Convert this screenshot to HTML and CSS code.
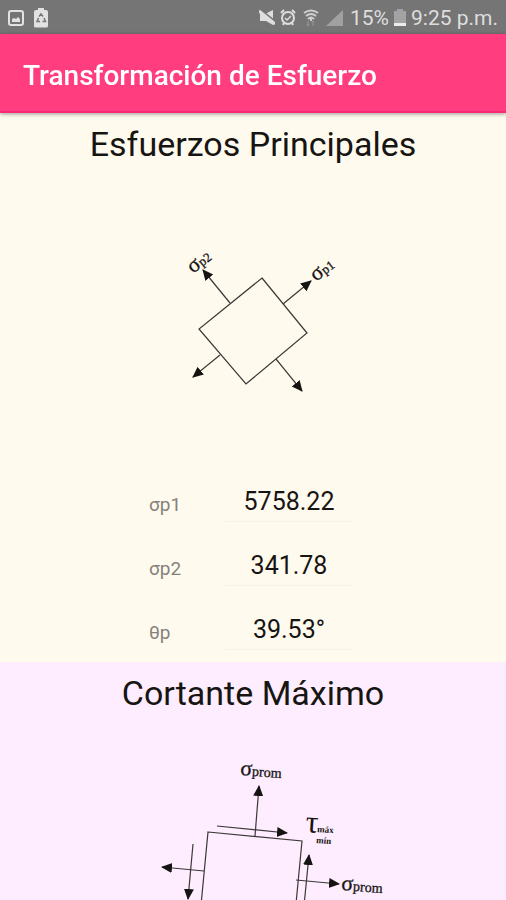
FILE: index.html
```html
<!DOCTYPE html>
<html lang="es">
<head>
<meta charset="utf-8">
<meta name="viewport" content="width=device-width, initial-scale=1">
<title>Transformación de Esfuerzo</title>
<link rel="stylesheet" href="styles.css">
</head>
<body>
<div class="app">
  <div class="status">
    <div class="status-group status-left">
      <svg width="16" height="16" viewBox="0 0 16 16" aria-hidden="true">
        <rect x="1" y="1" width="14" height="14" rx="2" fill="none" stroke="#e2e2e2" stroke-width="2"/>
        <path d="M4 12V9l2-1 2 1 2-2 2 2v3z" fill="#e2e2e2"/>
      </svg>
      <svg width="14" height="20" viewBox="0 0 14 20" aria-hidden="true">
        <path d="M4 0h6v2h2a2 2 0 0 1 2 2v14a1.500 1.500 0 0 1-1.500 1.500h-11A1.500 1.500 0 0 1 0 18V4a2 2 0 0 1 2-2h2z" fill="#e2e2e2"/>
        <path d="M5 8.500 7 6l2 2.500M10 10l1.500 3.500H8.500M6 13.500H3L4.500 10" fill="none" stroke="#777" stroke-width="1.500"/>
      </svg>
    </div>
    <div class="status-group status-right">
      <svg width="16" height="18" viewBox="0 0 16 18" aria-hidden="true">
        <path d="M1 5h5l8-4v15l-7-4H1z" fill="#dedede"/>
        <path d="M2 1l15 12" stroke="#757575" stroke-width="2"/>
        <path d="M0 2l16 13" stroke="#dedede" stroke-width="3"/>
      </svg>
      <svg width="16" height="18" viewBox="0 0 16 18" fill="none" stroke="#dedede" aria-hidden="true">
        <circle cx="8" cy="9" r="6" stroke-width="2"/>
        <path d="M1 4l3-3M15 4l-3-3M3 16l1-2M13 16l-1-2" stroke-width="2"/>
        <path d="M5 9l2 2 4-4" stroke-width="1.500"/>
      </svg>
      <svg class="wifi" width="16" height="18" viewBox="0 0 16 18" fill="none" stroke="#cfcfcf" aria-hidden="true">
        <path d="M1 4q7-5 14 0M3 7q5-4 10 0M5 10q3-3 6 0" stroke-width="2"/>
        <path d="M8 9v3" stroke-width="2"/>
        <path d="M5 12v5M3.500 15.500 5 17l1.500-1.500M10 17v-5M8.500 13.500 10 12l1.500 1.500" stroke="#999"/>
      </svg>
      <svg width="17" height="18" viewBox="0 0 17 18" aria-hidden="true">
        <path d="M17 1v16H0z" fill="#a1a1a1"/>
      </svg>
      <span class="charge">15%</span>
      <svg width="12" height="18" viewBox="0 0 12 18" aria-hidden="true">
        <path d="M3 0h6v2h3v12H0V2h3z" fill="#a3a3a3"/>
        <path d="M0 14h12v3H0z" fill="#ececec"/>
      </svg>
      <span class="clock">9:25 p.m.</span>
    </div>
  </div>

  <header class="bar"><h1>Transformación de Esfuerzo</h1></header>

  <main class="content">
    <section class="panel panel-main">
      <h2>Esfuerzos Principales</h2>
      <svg class="figure" width="240" height="306" viewBox="133 164 240 306" role="img" aria-label="Elemento con esfuerzos principales">
        <defs>
          <marker id="tip" markerUnits="userSpaceOnUse" markerWidth="12" markerHeight="12" refX="10" refY="5" orient="auto">
            <path d="M0 0 11 5 0 10z" fill="#161412"/>
          </marker>
        </defs>
        <g class="lines">
          <path d="M262 278 307 333 246 384 199 329z"/>
          <path d="M230 303 203 270" marker-end="url(#tip)"/>
          <path d="M283 304 311 281" marker-end="url(#tip)"/>
          <path d="M220 355 193 377" marker-end="url(#tip)"/>
          <path d="M276 359 302 391" marker-end="url(#tip)"/>
        </g>
        <text class="sigma" transform="translate(193 274) rotate(-38)">σ<tspan class="sub-tight">p2</tspan></text>
        <text class="sigma" transform="translate(316 282) rotate(-38)">σ<tspan class="sub-tight">p1</tspan></text>
      </svg>
      <div class="results">
        <div class="row"><label for="s1">σp1</label><input id="s1" type="text" value="5758.22"></div>
        <div class="row"><label for="s2">σp2</label><input id="s2" type="text" value="341.78"></div>
        <div class="row"><label for="th">θp</label><input id="th" type="text" value="39.53°"></div>
      </div>
    </section>

    <section class="panel panel-shear">
      <h2>Cortante Máximo</h2>
      <svg class="figure" width="280" height="306" viewBox="113 713 280 306" role="img" aria-label="Elemento con cortante máximo">
        <g class="lines">
          <path d="M208 832 302 841 293 935 199 926z"/>
          <path d="M255 836 259 786" marker-end="url(#tip)"/>
          <path d="M217 826 287 833" marker-end="url(#tip)"/>
          <path d="M204 871 162 867" marker-end="url(#tip)"/>
          <path d="M193 844 188 899" marker-end="url(#tip)"/>
          <path d="M296 880 339 884" marker-end="url(#tip)"/>
          <path d="M303 916 309 855" marker-end="url(#tip)"/>
        </g>
        <text class="sigma" transform="translate(240 775) rotate(4)">σ<tspan class="sub">prom</tspan></text>
        <text class="sigma" transform="translate(341 890) rotate(4)">σ<tspan class="sub">prom</tspan></text>
        <text class="tau" transform="translate(305 832) rotate(4)">τ</text>
        <text class="limit" transform="translate(317 832) rotate(4)">máx</text>
        <text class="limit" transform="translate(316 843) rotate(4)">mín</text>
      </svg>
    </section>
  </main>
</div>
</body>
</html>
```
FILE: styles.css
```css
* {
  box-sizing: border-box;
}

body {
  margin: 0;
  font-family: Roboto, "Liberation Sans", sans-serif;
  color: #171512;
}

.app {
  display: flex;
  flex-direction: column;
  height: 100vh;
}

.status {
  display: flex;
  flex: none;
  align-items: center;
  justify-content: space-between;
  height: 34px;
  padding: 2px 8px 0;
  background: #757575;
  color: #dedede;
  font-size: 21px;
}

.status-group {
  display: flex;
  align-items: center;
}

.status-left {
  gap: 10px;
}

.status-right {
  gap: 5px;
}

.wifi {
  margin: 0 2px;
}

.charge {
  margin-left: 2px;
}

.bar {
  position: relative;
  z-index: 1;
  display: flex;
  flex: none;
  align-items: center;
  height: 79px;
  padding: 6px 23px 0;
  background: #ff3d7f;
  border-bottom: 2px solid #fb2777;
  box-shadow: 0 1px 4px rgba(0, 0, 0, 0.4);
}

h1 {
  margin: 0;
  color: #fff;
  font-size: 28px;
  font-weight: 500;
  line-height: 32px;
}

.content {
  flex: 1;
  min-height: 0;
  overflow-y: auto;
  scrollbar-width: none;
}

.panel {
  display: flex;
  flex-direction: column;
  align-items: center;
  padding-top: 11px;
}

.panel-main {
  background: #fffaee;
}

.panel-shear {
  background: #fdedff;
}

h2 {
  margin: 0;
  font-size: 34px;
  font-weight: 400;
  line-height: 40px;
}

.figure {
  display: block;
}

.lines {
  fill: none;
  stroke: #3b3836;
  stroke-width: 1.2;
}

.sigma {
  font-family: "Liberation Serif", serif;
  font-size: 22px;
  fill: #161412;
  stroke: #161412;
  stroke-width: 0.3;
}

.sub {
  font-size: 14px;
}

.sub-tight {
  font-size: 13px;
}

.tau {
  font-family: "Liberation Serif", serif;
  font-size: 32px;
  fill: #161412;
}

.limit {
  font-family: "Liberation Serif", serif;
  font-size: 9px;
  font-weight: 700;
  fill: #161412;
}

.results {
  padding-right: 4px;
}

.row {
  display: grid;
  grid-template-columns: 76px 128px;
  align-items: center;
  height: 64px;
}

label {
  padding-top: 4px;
  color: #85827d;
  font-size: 19px;
}

input {
  width: 100%;
  height: 40px;
  padding: 0;
  border: 0;
  border-bottom: 1px solid #f7f2e7;
  background: transparent;
  color: #171512;
  font: inherit;
  font-size: 25px;
  text-align: center;
}
```
